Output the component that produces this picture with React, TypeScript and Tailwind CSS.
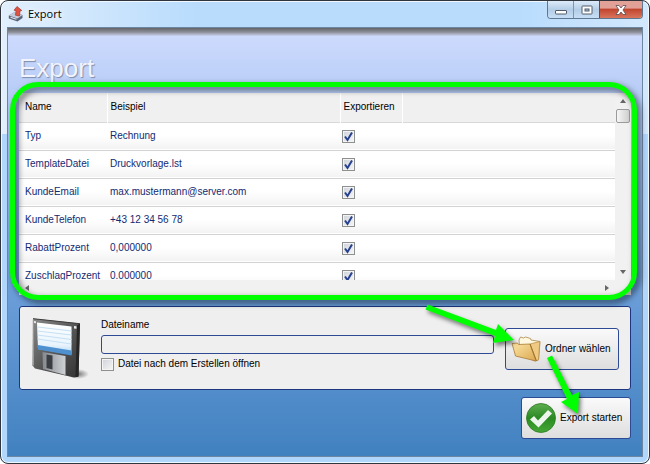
import { useState } from 'react';

const initialFields = [
  { name: 'Typ', sample: 'Rechnung', checked: true },
  { name: 'TemplateDatei', sample: 'Druckvorlage.lst', checked: true },
  { name: 'KundeEmail', sample: 'max.mustermann@server.com', checked: true },
  { name: 'KundeTelefon', sample: '+43 12 34 56 78', checked: true },
  { name: 'RabattProzent', sample: '0,000000', checked: true },
  { name: 'ZuschlagProzent', sample: '0.000000', checked: true },
];

function ExportIcon() {
  return (
    <svg viewBox="0 0 16 16" className="w-4 h-4">
      <path d="M.8 9.500 6 6.500l8.500 2.500v3L9.500 15.500.8 12.500z" fill="#5a6478" />
      <path d="M.8 9.500 6 6.500l8.500 2.500-5 3.500z" fill="#c3ccda" />
      <path d="M2.500 11.200 8.500 13.300" stroke="#dfe5ee" strokeWidth="1.200" />
      <path d="M9 .5 13.800 4.500 12 5l-.5 5-4-.8.5-4.700-2-.2z" fill="#dd5442" stroke="#a3382c" strokeWidth=".7" />
    </svg>
  );
}

function FloppyIcon() {
  return (
    <svg viewBox="0 0 60 64" className="w-15 h-16 shrink-0">
      <defs>
        <linearGradient id="body" x1="0" y1="0" x2="1" y2="1">
          <stop offset="0" stopColor="#8a8a8a" />
          <stop offset=".5" stopColor="#565656" />
          <stop offset="1" stopColor="#333" />
        </linearGradient>
        <linearGradient id="label" x1="0" y1="0" x2="0" y2="1">
          <stop offset="0" stopColor="#fff" />
          <stop offset=".7" stopColor="#e9f4fd" />
          <stop offset="1" stopColor="#a9d2f3" />
        </linearGradient>
        <linearGradient id="metal" x1="0" y1="0" x2="1" y2="0">
          <stop offset="0" stopColor="#85898e" />
          <stop offset="1" stopColor="#cfd2d5" />
        </linearGradient>
        <radialGradient id="floor">
          <stop offset="0" stopColor="#000" stopOpacity=".5" />
          <stop offset="1" stopColor="#000" stopOpacity="0" />
        </radialGradient>
      </defs>
      <ellipse cx="48" cy="57" rx="11" ry="5" fill="url(#floor)" />
      <path d="M3 1.500 50 6.500l-1.500 53-4.500 1L5 51.500 2.500 48.500z" fill="url(#body)" />
      <path d="M3 1.700 49.800 6.700" stroke="#3c3c3c" strokeWidth="1" />
      <path d="M3.300 2.500 3.500 48.500" stroke="#9a9a9a" strokeWidth="1" />
      <path d="M50 6.500 47 8.500 45.500 60.300l3-.8z" fill="#262626" />
      <path d="M7 5.500 41.500 9.500v28L8 32z" fill="url(#label)" />
      <path d="M7.800 28 41.500 33.500v5L8 32.500z" fill="#4f90cf" />
      <path d="M7.500 10l34 4M7.500 14l34 4M7.500 18l34 4.500M7.500 22l34 5" stroke="#c5e0f5" strokeWidth="1" />
      <path d="M12.500 35 35.500 39v19L13 52z" fill="url(#metal)" />
      <path d="M16.500 37.500l6 1v14l-6-1.500z" fill="#3a3d42" />
      <path d="M4 4l2 .3v2L4 6zM44 9l2.500.3v2.500L44 11.500z" fill="#e8e8e8" />
    </svg>
  );
}

function FolderIcon() {
  return (
    <svg viewBox="0 0 30 26" className="w-[30px] h-[26px] shrink-0">
      <defs>
        <linearGradient id="folder" x1="0" y1="0" x2="1" y2="1">
          <stop offset="0" stopColor="#fce6a6" />
          <stop offset="1" stopColor="#dba850" />
        </linearGradient>
      </defs>
      <path d="M8 4 9.500 1l3 1 2-1 5 1.500.5 1.500 9 1.500L27.500 24l-4 1L9 18z" fill="#fff8df" stroke="#a98650" strokeWidth=".8" />
      <path d="M19 8 28.800 5.500 27.500 23.500l-2 1.500z" fill="#f0ca82" stroke="#b58a42" strokeWidth=".7" />
      <path d="M1 7.500 6.500 7l1 1.500L19 8l6 17L4.500 20z" fill="url(#folder)" stroke="#a97a33" strokeWidth=".8" />
      <path d="M19 8 25.500 25" stroke="#8f682b" strokeWidth=".7" />
    </svg>
  );
}

function CheckIcon() {
  return (
    <svg viewBox="0 0 30 30" className="w-[30px] h-[30px] shrink-0">
      <defs>
        <linearGradient id="green" x1="0" y1="0" x2="0" y2="1">
          <stop offset="0" stopColor="#5fae50" />
          <stop offset=".5" stopColor="#2a8a22" />
          <stop offset="1" stopColor="#45a834" />
        </linearGradient>
      </defs>
      <circle cx="15" cy="15" r="14.500" fill="url(#green)" stroke="#2d7a26" strokeWidth=".8" />
      <path d="M4 16.500 8 13l4 4.500L22 7l4 3.500L12.500 24.500z" fill="#eef5ec" />
    </svg>
  );
}

function Arrow({ direction }: { direction: 'up' | 'down' | 'left' | 'right' }) {
  const paths = {
    up: 'M1 6 4 2l3 4z',
    down: 'M1 2h6L4 6z',
    left: 'M6 1v6L2 4z',
    right: 'M2 1v6l4-3z',
  };
  return (
    <svg viewBox="0 0 8 8" className="w-2 h-2">
      <path d={paths[direction]} fill="#666" />
    </svg>
  );
}

const checkboxStyle =
  'peer appearance-none block w-[13px] h-[13px] border border-[#8e8f8f] bg-linear-to-br from-[#cfd3da] to-[#f6f6f6] shadow-[inset_0_0_0_1px_#f4f4f4]';

const buttonStyle =
  'flex items-center h-[42px] rounded-[3px] border border-[#2e4a94] bg-linear-to-b from-[#fafafa] to-[#dedede] text-[10px] whitespace-nowrap text-black';

export default function App() {
  const [fields, setFields] = useState(initialFields);
  const [fileName, setFileName] = useState('');
  const [openAfter, setOpenAfter] = useState(false);

  const toggleField = (name: string) => {
    setFields(fields.map((f) => (f.name === name ? { ...f, checked: !f.checked } : f)));
  };

  return (
    <div className="bg-white font-['Liberation_Sans',sans-serif] text-[10px] leading-4 text-black">
      <div className="relative flex flex-col min-h-screen rounded-lg border border-[#30343c] bg-[#b0d6fc] bg-[linear-gradient(to_right,#e2effc,#b9dcfd_30%,#b9dcfd_80%,#d3e8fc)] bg-[length:100%_133px] bg-no-repeat shadow-[inset_0_0_0_1px_#f0f8ff] px-1.5 pb-1.5">
        {/* Title bar */}
        <header className="flex items-start justify-between h-[26px] pl-px">
          <div className="flex items-center gap-1 pt-[5px]">
            <ExportIcon />
            <h1 className="font-['Open_Sans',sans-serif] text-[11px] leading-4 [text-shadow:0_0_6px_#fff,0_0_8px_#fff]">Export</h1>
          </div>
          <div className="flex h-[18px] rounded-b border border-t-0 border-[#5f7892] overflow-hidden">
            <button aria-label="Minimieren" className="flex items-center justify-center w-[26px] bg-linear-to-b from-[#dcebfa] via-[#b4cde6] to-[#c6dff6] border-r border-[#7d95ae]">
              <svg viewBox="0 0 12 10" className="w-3 h-2.5">
                <rect x=".5" y="5.500" width="11" height="3.500" rx=".5" fill="#fff" stroke="#545d6b" />
              </svg>
            </button>
            <button aria-label="Maximieren" className="flex items-center justify-center w-[25px] bg-linear-to-b from-[#dcebfa] via-[#b4cde6] to-[#c6dff6]">
              <svg viewBox="0 0 12 10" className="w-3 h-2.5">
                <rect x="1" y="1" width="10" height="8" rx=".5" fill="#fff" stroke="#545d6b" />
                <rect x="4" y="4" width="4" height="2" fill="#a9c6e2" stroke="#545d6b" />
              </svg>
            </button>
            <button aria-label="Schließen" className="flex items-center justify-center w-[43px] border-l border-[#7d4040] bg-linear-to-b from-[#e2a196] from-40% via-[#c14630] via-50% to-[#d9745c]">
              <svg viewBox="0 0 12 10" className="w-3 h-2.5">
                <path d="M1 .5h3l2 2.500 2-2.500h3L8 5l3 4.500H8L6 7 4 9.500H1L4 5z" fill="#fff" stroke="#5c4a52" strokeWidth=".8" />
              </svg>
            </button>
          </div>
        </header>

        <main className="grow flex flex-col border border-[#6d87a3] bg-linear-to-b from-[#d0dcff] via-[#6d9fda] via-60% to-[#4181c0] px-[11px] pb-4">
          <div className="-mx-[11px] h-2 shrink-0 bg-linear-to-b from-[#626468] via-[#8a8d96] to-[#cbd5f3]" />
          <h2 className="mt-4 h-[41px] text-[26px] leading-8 text-[#f1f4fc] [text-shadow:1px_1px_1px_#7f8cab]">Export</h2>

          {/* Field list */}
          <section className="relative bg-[#f1f1f1]">
            <div className="flex">
              <div className="grow h-[187px] overflow-hidden">
                <table className="w-full table-fixed border-collapse">
                  <thead>
                    <tr className="h-[29px] bg-[#f0f0f0] border-b border-[#d8d8d8] text-left">
                      <th className="w-[88px] pl-1.5 font-normal border-r border-white">Name</th>
                      <th className="w-[233px] pl-[3px] font-normal border-r border-white">Beispiel</th>
                      <th className="w-[62px] pl-[3px] font-normal border-r border-white">Exportieren</th>
                      <th />
                    </tr>
                  </thead>
                  <tbody className="text-[#122a72]">
                    {fields.map((field) => (
                      <tr key={field.name} className="h-7 border-b border-[#d2d2d2] bg-linear-to-b from-white from-50% to-[#f3f3f3]">
                        <td className="pl-1.5 whitespace-nowrap">{field.name}</td>
                        <td className="pl-[3px] whitespace-nowrap">{field.sample}</td>
                        <td className="pl-0.5">
                          <label className="relative block w-[13px]">
                            <input
                              type="checkbox"
                              aria-label={`${field.name} exportieren`}
                              checked={field.checked}
                              onChange={() => toggleField(field.name)}
                              className={checkboxStyle}
                            />
                            <svg viewBox="0 0 13 13" className="absolute inset-0 hidden peer-checked:block pointer-events-none">
                              <path d="M3 6.500 5.500 10 10 2.500" fill="none" stroke="#27408f" strokeWidth="2" />
                            </svg>
                          </label>
                        </td>
                        <td />
                      </tr>
                    ))}
                  </tbody>
                </table>
              </div>
              <div className="flex flex-col items-center w-4 shrink-0 bg-[#f1f1f1] py-1">
                <Arrow direction="up" />
                <div className="mt-1 w-3.5 h-3.5 rounded-xs border border-[#9a9a9a] bg-linear-to-r from-[#f6f6f6] to-[#cfcfcf]" />
                <div className="mt-auto">
                  <Arrow direction="down" />
                </div>
              </div>
            </div>
            <div className="flex items-center justify-between h-[15px] bg-[#f1f1f1] pl-1 pr-5">
              <Arrow direction="left" />
              <Arrow direction="right" />
            </div>
            {/* Highlight frame */}
            <div className="absolute -top-[11px] -left-[9px] -right-[6px] -bottom-[5px] rounded-[28px] border-5 border-[#00ff00] [filter:drop-shadow(3px_3px_3px_rgba(0,0,0,0.6))] pointer-events-none" />
          </section>

          {/* Target file */}
          <section className="mt-[11px] flex h-[84px] rounded-[3px] border border-[#1c3680] bg-[#efefef] pl-2.5 pr-[11px]">
            <div className="pt-2.5">
              <FloppyIcon />
            </div>
            <div className="grow pt-2.5 pl-[11px]">
              <label htmlFor="file-name" className="block">Dateiname</label>
              <input
                id="file-name"
                type="text"
                value={fileName}
                onChange={(e) => setFileName(e.target.value)}
                className="block mt-0.5 w-full h-[19px] rounded-[3px] border border-[#2e4a94] bg-[#efefef] px-1"
              />
              <div className="mt-0.5 flex items-center gap-1">
                <label className="relative">
                  <input
                    id="open-after"
                    type="checkbox"
                    checked={openAfter}
                    onChange={(e) => setOpenAfter(e.target.checked)}
                    className={checkboxStyle}
                  />
                  <svg viewBox="0 0 13 13" className="absolute inset-0 hidden peer-checked:block pointer-events-none">
                    <path d="M3 6.500 5.500 10 10 2.500" fill="none" stroke="#27408f" strokeWidth="2" />
                  </svg>
                </label>
                <label htmlFor="open-after">Datei nach dem Erstellen öffnen</label>
              </div>
            </div>
            <button className={`${buttonStyle} ml-[11px] mt-[21px] w-[114px] gap-1 pl-[5px]`}>
              <FolderIcon />
              Ordner wählen
            </button>
          </section>

          <button className={`${buttonStyle} self-end mt-[7px] w-[110px] gap-1 pl-1`}>
            <CheckIcon />
            Export starten
          </button>
        </main>

        {/* Step arrows */}
        <svg viewBox="0 0 160 120" className="absolute right-[66px] top-[300px] w-40 h-30 pointer-events-none [filter:drop-shadow(2px_3px_2px_rgba(0,0,0,0.5))]">
          <path d="M4.500 3.500 73 29l2-6 16 16-21 3 2-7L2.500 8.500z" fill="#00ff00" />
          <path d="M124 57l5-2.500L149 94l7-3-1 22-17-12 6-3z" fill="#00ff00" />
        </svg>
      </div>
    </div>
  );
}
